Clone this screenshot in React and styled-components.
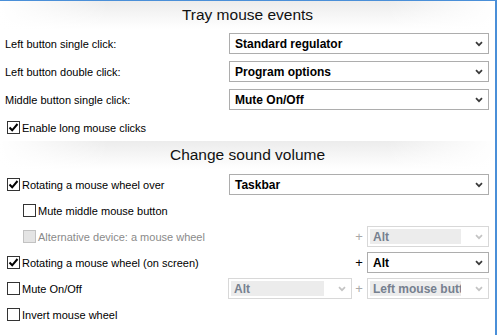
import styled, { createGlobalStyle } from "styled-components";

const GlobalStyle = createGlobalStyle`
  html, body { margin: 0; padding: 0; background: #fff; }
  body { font-family: "Liberation Sans", Arial, sans-serif; font-size: 11px; color: #000; }
`;

const App = () => {
  return (
    <>
      <GlobalStyle />
      <Page>
        <Title>Tray mouse events</Title>
        <Rows $gap={7} $top={4}>
          <Row>
            <Label>Left button single click:</Label>
            <Select value="Standard regulator" />
          </Row>
          <Row>
            <Label>Left button double click:</Label>
            <Select value="Program options" />
          </Row>
          <Row>
            <Label>Middle button single click:</Label>
            <Select value="Mute On/Off" />
          </Row>
          <Row>
            <Check checked text="Enable long mouse clicks" />
          </Row>
        </Rows>

        <Title $top={3}>Change sound volume</Title>
        <Rows $gap={5} $top={5}>
          <Row>
            <Check checked text="Rotating a mouse wheel over" />
            <Select value="Taskbar" />
          </Row>
          <Row>
            <Check indent text="Mute middle mouse button" />
          </Row>
          <Row>
            <Check indent disabled text="Alternative device: a mouse wheel" />
            <Combo>
              <span />
              <Plus $disabled>+</Plus>
              <Select disabled value="Alt" />
            </Combo>
          </Row>
          <Row>
            <Check checked text="Rotating a mouse wheel (on screen)" />
            <Combo>
              <span />
              <Plus>+</Plus>
              <Select value="Alt" />
            </Combo>
          </Row>
          <Row>
            <Check text="Mute On/Off" />
            <Combo>
              <Select disabled value="Alt" />
              <Plus $disabled>+</Plus>
              <Select disabled value="Left mouse button" />
            </Combo>
          </Row>
          <Row>
            <Check text="Invert mouse wheel" />
          </Row>
        </Rows>
      </Page>
    </>
  );
};

const Select = ({ value, disabled }) => (
  <SelectBox $disabled={disabled}>
    <SelectValue $disabled={disabled}>{value}</SelectValue>
    <svg width="8" height="6" viewBox="0 0 8 6">
      <polyline
        points="1,1.2 4,4.2 7,1.2"
        fill="none"
        stroke={disabled ? "#c4c4c4" : "#3a3a3a"}
        strokeWidth="1.7"
      />
    </svg>
  </SelectBox>
);

const Check = ({ checked, disabled, indent, text }) => (
  <CheckLabel $indent={indent} $disabled={disabled}>
    <Box $disabled={disabled}>
      {checked && (
        <svg width="11" height="11" viewBox="0 0 11 11">
          <polyline points="1.5,5.5 4.2,8.3 9.5,2" fill="none" stroke="#000" strokeWidth="2" />
        </svg>
      )}
    </Box>
    <span>{text}</span>
  </CheckLabel>
);

const Page = styled.div`
  width: 497px;
  height: 335px;
  box-sizing: border-box;
  border-top: 1px solid #4a8fd8;
  border-right: 2px solid #4a8fd8;
  overflow: hidden;
`;

const Title = styled.div`
  height: 28px;
  margin-top: ${(p) => p.$top || 0}px;
  display: flex;
  align-items: center;
  justify-content: center;
  font-size: 15.5px;
  color: #111;
  background:
    linear-gradient(to right, #fff 0%, rgba(255, 255, 255, 0) 22%, rgba(255, 255, 255, 0) 78%, #fff 100%),
    linear-gradient(to bottom, #ececec 0%, #f6f6f6 50%, #fff 100%);
`;

const Rows = styled.div`
  display: flex;
  flex-direction: column;
  gap: ${(p) => p.$gap}px;
  padding-top: ${(p) => p.$top}px;
`;

const Row = styled.div`
  display: grid;
  grid-template-columns: 223px 261px;
  align-items: center;
  height: 21px;
  padding-left: 5px;
`;

const Label = styled.span`
  white-space: nowrap;
`;

const CheckLabel = styled.label`
  display: flex;
  align-items: center;
  gap: 2px;
  padding-left: ${(p) => (p.$indent ? 18 : 2)}px;
  white-space: nowrap;
  color: ${(p) => (p.$disabled ? "#8a8a8a" : "#000")};
`;

const Box = styled.span`
  width: 11px;
  height: 11px;
  border: 1px solid ${(p) => (p.$disabled ? "#c2c2c2" : "#333")};
  background: ${(p) => (p.$disabled ? "#e4e4e4" : "#fff")};
  display: flex;
  align-items: center;
  justify-content: center;
`;

const SelectBox = styled.div`
  height: 21px;
  box-sizing: border-box;
  margin-left: 1px;
  border: 1px solid ${(p) => (p.$disabled ? "#d8d8d8" : "#adadad")};
  background: #fff;
  display: flex;
  align-items: center;
  gap: 4px;
  padding: 2px 5px 2px 2px;
  min-width: 0;
  svg { flex: none; }
`;

const SelectValue = styled.span`
  flex: 1;
  align-self: stretch;
  display: flex;
  align-items: center;
  padding-left: 3px;
  margin-right: ${(p) => (p.$disabled ? 10 : 0)}px;
  font-weight: bold;
  font-size: 12px;
  white-space: nowrap;
  overflow: hidden;
  color: ${(p) => (p.$disabled ? "#76808f" : "#000")};
  background: ${(p) => (p.$disabled ? "#ececec" : "transparent")};
`;

const Combo = styled.div`
  display: grid;
  grid-template-columns: 124px 14px 123px;
  align-items: center;
  & > div:first-child { margin-left: 0; }
`;

const Plus = styled.span`
  text-align: center;
  font-size: 13px;
  color: ${(p) => (p.$disabled ? "#a8a8a8" : "#000")};
`;

export default App;
